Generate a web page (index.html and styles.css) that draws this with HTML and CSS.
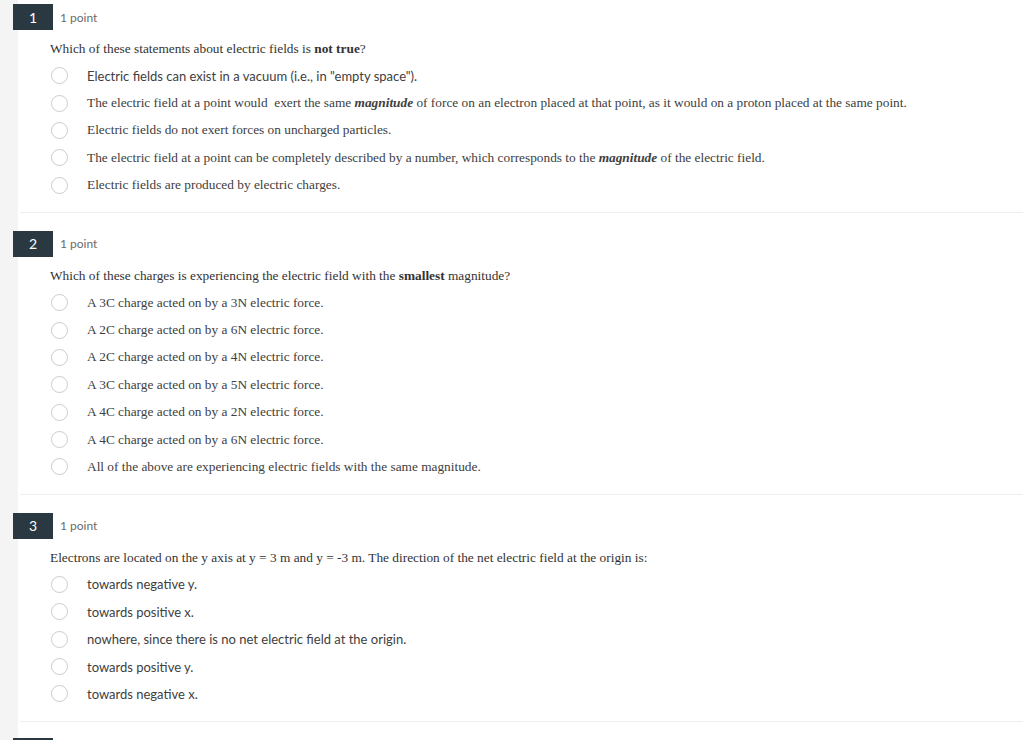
FILE: index.html
```html
<!DOCTYPE html>
<html>
<head>
<meta charset="utf-8">
<link rel="stylesheet" href="styles.css">
</head>
<body>
<div class="quiz">
  <section class="question">
    <div class="qhead"><span class="badge">1</span><span class="points">1 point</span></div>
    <div class="prompt serif">Which of these statements about electric fields is <b>not true</b>?</div>
    <ul class="options">
      <li class="option"><span class="radio"></span><span class="label sans">Electric ﬁelds can exist in a vacuum (i.e., in "empty space").</span></li>
      <li class="option"><span class="radio"></span><span class="label serif">The electric field at a point would&nbsp; exert the same <b><i>magnitude</i></b> of force on an electron placed at that point, as it would on a proton placed at the same point.</span></li>
      <li class="option"><span class="radio"></span><span class="label serif">Electric fields do not exert forces on uncharged particles.</span></li>
      <li class="option"><span class="radio"></span><span class="label serif">The electric field at a point can be completely described by a number, which corresponds to the <b><i>magnitude</i></b> of the electric field.</span></li>
      <li class="option"><span class="radio"></span><span class="label serif">Electric fields are produced by electric charges.</span></li>
    </ul>
  </section>
  <section class="question">
    <div class="qhead"><span class="badge">2</span><span class="points">1 point</span></div>
    <div class="prompt serif">Which of these charges is experiencing the electric field with the <b>smallest</b> magnitude?</div>
    <ul class="options">
      <li class="option"><span class="radio"></span><span class="label serif">A 3C charge acted on by a 3N electric force.</span></li>
      <li class="option"><span class="radio"></span><span class="label serif">A 2C charge acted on by a 6N electric force.</span></li>
      <li class="option"><span class="radio"></span><span class="label serif">A 2C charge acted on by a 4N electric force.</span></li>
      <li class="option"><span class="radio"></span><span class="label serif">A 3C charge acted on by a 5N electric force.</span></li>
      <li class="option"><span class="radio"></span><span class="label serif">A 4C charge acted on by a 2N electric force.</span></li>
      <li class="option"><span class="radio"></span><span class="label serif">A 4C charge acted on by a 6N electric force.</span></li>
      <li class="option"><span class="radio"></span><span class="label serif">All of the above are experiencing electric fields with the same magnitude.</span></li>
    </ul>
  </section>
  <section class="question">
    <div class="qhead"><span class="badge">3</span><span class="points">1 point</span></div>
    <div class="prompt serif">Electrons are located on the y axis at y = 3 m and y = -3 m. The direction of the net electric field at the origin is:</div>
    <ul class="options">
      <li class="option"><span class="radio"></span><span class="label sans">towards negative y.</span></li>
      <li class="option"><span class="radio"></span><span class="label sans">towards positive x.</span></li>
      <li class="option"><span class="radio"></span><span class="label sans">nowhere, since there is no net electric ﬁeld at the origin.</span></li>
      <li class="option"><span class="radio"></span><span class="label sans">towards positive y.</span></li>
      <li class="option"><span class="radio"></span><span class="label sans">towards negative x.</span></li>
    </ul>
  </section>
  <div class="next-stub"><span class="badge"></span></div>
</div>
</body>
</html>
```

FILE: styles.css
```css
html, body {
  margin: 0;
  padding: 0;
}
body {
  background: linear-gradient(to right, #f4f4f4 0, #f4f4f4 18px, #ffffff 18px);
  color: #333;
  font-family: "Lato", "Liberation Sans", sans-serif;
  height: 740px;
  overflow: hidden;
}
.quiz {
  padding-top: 4px;
  display: flex;
  flex-direction: column;
  gap: 18px;
}
.question {
  padding-bottom: 13px;
  border-bottom: 1px solid #efefef;
  margin-left: 20px;
}
.qhead {
  display: flex;
  align-items: center;
  height: 26px;
  margin-left: -7px;
}
.badge {
  width: 40px;
  height: 26px;
  background: #2a3842;
  color: #fff;
  font-size: 14px;
  display: flex;
  align-items: center;
  justify-content: center;
  flex: none;
}
.next-stub {
  margin-top: -2px;
  margin-left: 13px;
}
.points {
  margin-left: 7px;
  font-size: 12px;
  color: #6b6b6b;
}
.serif {
  font-family: "Liberation Serif", "Times New Roman", serif;
  font-size: 13.33px;
}
.sans {
  font-family: "Lato", "Liberation Sans", sans-serif;
  font-size: 13px;
}
.prompt {
  margin-top: 10px;
  margin-left: 30px;
  line-height: 18px;
  color: #333;
}
.options {
  list-style: none;
  margin: 4px 0 0 0;
  padding: 0 0 0 31px;
}
.option {
  display: flex;
  align-items: center;
  height: 27.4px;
}
.radio {
  width: 15px;
  height: 15px;
  border: 1px solid #cccccc;
  border-radius: 50%;
  background: #fff;
  flex: none;
}
.label {
  margin-left: 19px;
  color: #404040;
  white-space: nowrap;
}
```
